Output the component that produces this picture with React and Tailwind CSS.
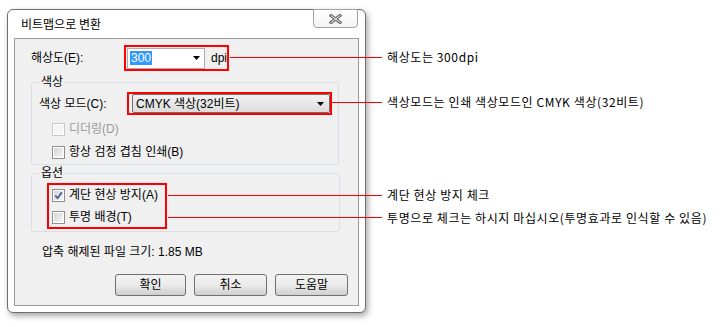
import React from 'react';

function Check({ checked, disabled }) {
  return (
    <span
      className={`flex h-[13px] w-[13px] shrink-0 items-center justify-center border ${
        disabled ? 'border-[#c9c9c9] bg-[#f4f4f4]' : 'border-[#8e8f8f] bg-white'
      }`}
    >
      <span
        className={`flex h-[11px] w-[11px] items-center justify-center border border-white ${
          disabled ? 'bg-[#f4f4f4]' : 'bg-gradient-to-br from-[#d4d4d4] to-[#f7f7f7]'
        }`}
      >
        {checked && (
          <svg width="9" height="9" viewBox="0 0 9 9">
            <path d="M1.2 4.6 L3.6 7.2 L7.8 1.4" fill="none" stroke="#4a5f97" strokeWidth="1.8" />
          </svg>
        )}
      </span>
    </span>
  );
}

function Arrow() {
  return (
    <svg width="7" height="4" viewBox="0 0 7 4">
      <path d="M0 0 H7 L3.5 4 Z" fill="#000" />
    </svg>
  );
}

function Button({ w, children }) {
  return (
    <button
      className={`${w} flex h-[22px] items-center justify-center rounded-[3px] border border-[#707070] bg-gradient-to-b from-[#f2f2f2] via-[#ebebeb] to-[#cfcfcf] text-[12px] text-black`}
    >
      {children}
    </button>
  );
}

export default function App() {
  return (
    <div className="relative flex h-[327px] w-[720px] overflow-hidden bg-white font-['Liberation_Sans','Noto_Sans_CJK_KR',sans-serif] text-[12px] leading-[14px] text-black">
      {/* Dialog */}
      <div className="ml-[7px] mt-[9px] flex h-[304px] w-[359px] shrink-0 flex-col rounded-[6px] border border-[#6e6e6e] bg-white shadow-[2px_3px_6px_rgba(0,0,0,0.35)]">
        {/* Title bar */}
        <div className="flex h-[28px] items-start justify-between">
          <span className="pl-[13px] pt-[7px] font-['Noto_Sans_CJK_KR',sans-serif] text-[12px]">비트맵으로 변환</span>
          <div className="mr-[7px] -mt-px flex h-[19px] w-[45px] items-center justify-center rounded-b-[4px] border border-[#a3a3a3] bg-gradient-to-b from-white to-[#f3f3f3]">
            <svg width="13" height="10" viewBox="0 0 13 10">
              <path d="M2 1.5 L11 8.5 M11 1.5 L2 8.5" stroke="#6a6a6a" strokeWidth="3.2" strokeLinecap="square" />
              <path d="M2 1.5 L11 8.5 M11 1.5 L2 8.5" stroke="#f2f2f2" strokeWidth="1" strokeLinecap="square" />
            </svg>
          </div>
        </div>

        {/* Client area */}
        <div className="mx-[6px] flex h-[268px] flex-col border border-[#9a9a9a] bg-[#f0f0f0] pt-[6px]">
          {/* Resolution */}
          <div className="flex items-center">
            <span className="w-[109px] pl-[16px]">해상도(E):</span>
            <div className="flex h-[26px] w-[105px] items-center border-2 border-[#ff0000] pl-px">
              <div className="flex h-[21px] w-[78px] items-center justify-between border border-[#abadb3] bg-white pl-[2px] pr-[4px]">
                <span className="bg-[#3399ff] px-px text-white">300</span>
                <Arrow />
              </div>
              <span className="ml-[6px]">dpi</span>
            </div>
          </div>

          {/* Colour group */}
          <fieldset className="ml-[16px] mt-[4px] w-[308px] rounded-[3px] border border-[#d5dfe5] pb-[2px] pl-[7px]">
            <legend className="px-[2px] leading-[14px]">색상</legend>
            <div className="mt-[3px] flex items-center">
              <span className="w-[88px]">색상 모드(C):</span>
              <div className="flex h-[23px] w-[205px] items-center border-2 border-[#ff0000] pl-[3px]">
                <div className="flex h-[19px] flex-1 items-center justify-between rounded-[2px] border border-[#707070] bg-gradient-to-b from-[#f2f2f2] to-[#dcdcdc] pl-[3px] pr-[5px]">
                  <span>CMYK 색상(32비트)</span>
                  <Arrow />
                </div>
              </div>
            </div>
            <div className="ml-[13px] mt-[4px] flex h-[20px] items-center gap-[4px] text-[#9a9a9a]">
              <Check disabled />
              <span>디더링(D)</span>
            </div>
            <div className="ml-[13px] mt-[3px] flex h-[20px] items-center gap-[4px]">
              <Check />
              <span>항상 검정 겹침 인쇄(B)</span>
            </div>
          </fieldset>

          {/* Options group */}
          <fieldset className="ml-[16px] mt-px w-[309px] rounded-[3px] border border-[#d5dfe5] pb-[2px] pl-[7px]">
            <legend className="px-[2px] leading-[14px]">옵션</legend>
            <div className="ml-[8px] mt-[3px] flex w-[120px] flex-col gap-[2px] border-2 border-[#ff0000] pl-[3px]">
              <div className="flex h-[20px] items-center gap-[4px]">
                <Check checked />
                <span>계단 현상 방지(A)</span>
              </div>
              <div className="flex h-[20px] items-center gap-[4px]">
                <Check />
                <span>투명 배경(T)</span>
              </div>
            </div>
          </fieldset>

          <div className="ml-[27px] mt-[12px] h-[16px] leading-[16px]">압축 해제된 파일 크기: 1.85 MB</div>

          <div className="mt-[14px] flex justify-end gap-[8px] pr-[10px]">
            <Button w="w-[71px]">확인</Button>
            <Button w="w-[73px]">취소</Button>
            <Button w="w-[73px]">도움말</Button>
          </div>
        </div>
      </div>

      {/* Annotations */}
      <div className="ml-[21px] flex flex-col font-['Noto_Sans_CJK_KR',sans-serif] text-[12px] leading-[16px] tracking-[0.6px]">
        <span className="mt-[49px]">해상도는 300dpi</span>
        <span className="mt-[29px]">색상모드는 인쇄 색상모드인 CMYK 색상(32비트)</span>
        <span className="mt-[77px]">계단 현상 방지 체크</span>
        <span className="mt-[7px]">투명으로 체크는 하시지 마십시오(투명효과로 인식할 수 있음)</span>
      </div>

      {/* Connector lines */}
      <div className="absolute left-[230px] top-[57px] h-px w-[152px] bg-[#ff0000]" />
      <div className="absolute left-[332px] top-[102px] h-px w-[50px] bg-[#ff0000]" />
      <div className="absolute left-[168px] top-[195px] h-px w-[214px] bg-[#ff0000]" />
      <div className="absolute left-[168px] top-[217px] h-px w-[214px] bg-[#ff0000]" />
    </div>
  );
}
